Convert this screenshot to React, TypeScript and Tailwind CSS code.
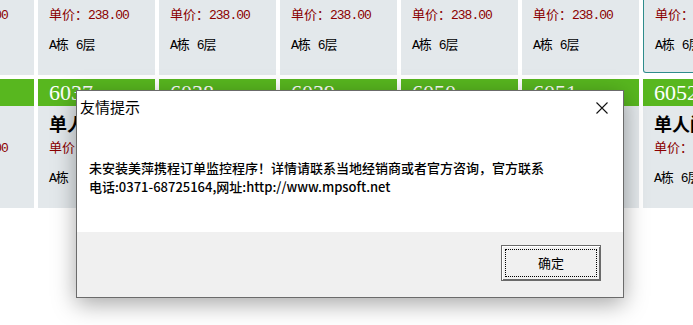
import React from "react";

interface Room {
  no: string;
  selected?: boolean;
}

const topRow: Room[] = [
  { no: "6025" },
  { no: "6026" },
  { no: "6027" },
  { no: "6028" },
  { no: "6029" },
  { no: "6030" },
  { no: "6031", selected: true },
];

const bottomRow: Room[] = [
  { no: "6036" },
  { no: "6037" },
  { no: "6038" },
  { no: "6039" },
  { no: "6050" },
  { no: "6051" },
  { no: "6052" },
];

function RoomCard({ room }: { room: Room }) {
  return (
    <div className="w-[117px] h-[129px] shrink-0 flex flex-col">
      <div className="h-[27px] bg-[#58b71f] pl-[11px] text-white text-[22px] leading-[27px] font-['Liberation_Serif',serif]">
        {room.no}
      </div>
      <div
        className={`flex-1 bg-[#e3e8eb] pl-[11px] pt-[7px] ${
          room.selected ? "border border-t-0 border-[#2f8c8c] rounded-bl-[3px] pl-[10px] mb-[2px]" : ""
        }`}
      >
        <div className="text-[18px] leading-[20px] font-bold text-black font-['Noto_Sans_CJK_SC',sans-serif]">
          单人间
        </div>
        <div className="mt-[6px] text-[13px] leading-[16px] text-[#8b0000] font-['Noto_Sans_CJK_SC',sans-serif]">
          单价：
          <span className="font-['Liberation_Mono',monospace] tracking-[-1px]">238.00</span>
        </div>
        <div className="mt-[12px] text-[13px] leading-[16px] text-black font-['Noto_Sans_CJK_SC',sans-serif]">
          <span className="font-['Liberation_Mono',monospace] tracking-[-1px]">A</span>栋
          <span className="font-['Liberation_Mono',monospace] tracking-[-1px]"> 6</span>层
        </div>
      </div>
    </div>
  );
}

export default function App() {
  return (
    <div className="relative w-[693px] h-[325px] overflow-hidden bg-white">
      {/* Room grid */}
      <div className="flex flex-col gap-[4px] -mt-[54px] -ml-[83px]">
        <div className="flex gap-[4px]">
          {topRow.map((r) => (
            <RoomCard key={r.no} room={r} />
          ))}
        </div>
        <div className="flex gap-[4px]">
          {bottomRow.map((r) => (
            <RoomCard key={r.no} room={r} />
          ))}
        </div>
      </div>

      {/* Message box */}
      <div className="absolute left-[76px] top-[90px] w-[548px] h-[208px] border border-[#6b6b6b] bg-white shadow-[0_6px_22px_rgba(0,0,0,0.35)] flex flex-col font-['Noto_Sans_CJK_SC',sans-serif]">
        <div className="h-[141px] flex flex-col">
          <div className="flex items-center justify-between h-[33px] pl-[3px] pr-[15px]">
            <span className="text-[15px] text-black">友情提示</span>
            <svg width="12" height="12" viewBox="0 0 12 12" className="mt-[1px]">
              <path d="M0.5 0.5 L11.5 11.5 M11.5 0.5 L0.5 11.5" stroke="#111" strokeWidth="1.1" />
            </svg>
          </div>
          <div className="pl-[12px] pt-[34px] text-[13px] leading-[19px] font-medium text-black">
            <div>未安装美萍携程订单监控程序！详情请联系当地经销商或者官方咨询，官方联系</div>
            <div>电话:0371-68725164,网址:http://www.mpsoft.net</div>
          </div>
        </div>
        <div className="flex-1 bg-[#f0f0f0] flex justify-end items-start pt-[13px] pr-[22px]">
          <button className="w-[100px] h-[36px] bg-[#f0f0f0] border border-[#6a6a6a] shadow-[inset_1px_1px_0_#ffffff,inset_-1px_-1px_0_#6a6a6a] p-[3px]">
            <div className="w-full h-full border border-dotted border-black flex items-center justify-center text-[13px] text-black">
              确定
            </div>
          </button>
        </div>
      </div>
    </div>
  );
}
